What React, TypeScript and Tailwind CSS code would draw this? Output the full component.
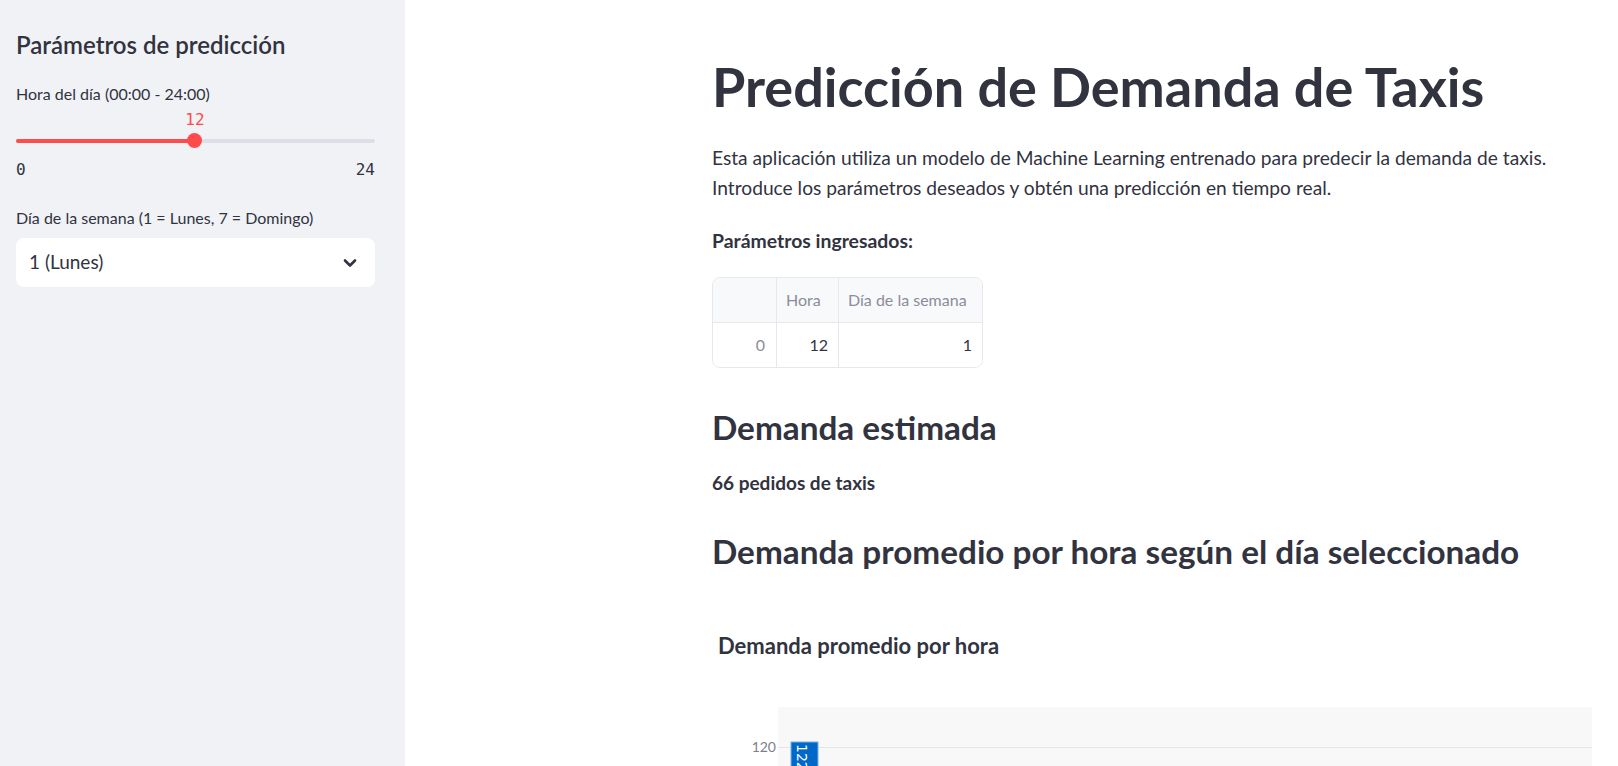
import React from "react";

const sans = { fontFamily: "Lato, 'Noto Sans', sans-serif" };
const mono = { fontFamily: "'DejaVu Sans Mono', 'Liberation Mono', monospace" };

function Sidebar() {
  return (
    <aside className="w-[405px] shrink-0 bg-[#f0f2f6] px-4 pt-[29px] text-[#31333f]">
      <h2 className="text-[24px] font-semibold leading-[32px]">Parámetros de predicción</h2>
      <div className="mt-[21px] text-[16px] leading-[24px]">Hora del día (00:00 - 24:00)</div>
      <div className="relative mt-[4px] h-[70px] w-[359px]" style={mono}>
        <div className="absolute left-[179px] top-0 -translate-x-1/2 text-[16px] leading-[20px] text-[#ff4b4b]">12</div>
        <div className="absolute left-0 right-0 top-[29px] h-[4px] rounded-full bg-[#dcdfe8]" />
        <div className="absolute left-0 top-[29px] h-[4px] w-[179px] rounded-full bg-[#ff4b4b]" />
        <div className="absolute left-[171px] top-[23px] h-[15px] w-[15px] rounded-full bg-[#ff4b4b]" />
        <div className="absolute left-0 top-[50px] text-[16px] leading-[20px] text-[#31333f]">0</div>
        <div className="absolute right-0 top-[50px] text-[16px] leading-[20px] text-[#31333f]">24</div>
      </div>
      <div className="mt-[26px] text-[16px] leading-[24px]">Día de la semana (1 = Lunes, 7 = Domingo)</div>
      <div className="mt-[8px] flex h-[49px] w-[359px] items-center justify-between rounded-[8px] bg-white pl-[13px] pr-[18px]">
        <span className="text-[19px]">1 (Lunes)</span>
        <svg width="14" height="10" viewBox="0 0 14 10" fill="none">
          <path d="M2 2.5 L7 7.5 L12 2.5" stroke="#31333f" strokeWidth="2.6" strokeLinecap="round" strokeLinejoin="round" />
        </svg>
      </div>
    </aside>
  );
}

function ParamTable() {
  return (
    <div className="mt-[21px] w-[271px] overflow-hidden rounded-[8px] border border-[#e6e8ee] text-[16px]">
      <div className="flex h-[45px] border-b border-[#e6e8ee] bg-[#f8f9fb] text-[#8a8d99]">
        <div className="w-[64px] border-r border-[#e6e8ee]" />
        <div className="flex w-[62px] items-center border-r border-[#e6e8ee] pl-[9px]">Hora</div>
        <div className="flex flex-1 items-center pl-[9px]">Día de la semana</div>
      </div>
      <div className="flex h-[44px] bg-white">
        <div className="flex w-[64px] items-center justify-end border-r border-[#e6e8ee] pr-[11px] text-[#8a8d99]">0</div>
        <div className="flex w-[62px] items-center justify-end border-r border-[#e6e8ee] pr-[10px]">12</div>
        <div className="flex flex-1 items-center justify-end pr-[10px]">1</div>
      </div>
    </div>
  );
}

function Chart() {
  return (
    <div className="mt-[62px]">
      <div className="pl-[6px] text-[22px] font-bold leading-[26px]">Demanda promedio por hora</div>
      <div className="mt-[48px] flex">
        <div className="relative w-[66px] shrink-0">
          <span className="absolute right-[2px] top-[31px] text-[14px] leading-[18px] text-[#7d808c]">120</span>
        </div>
        <div className="relative h-[80px] w-[814px] shrink-0 bg-[#f8f8f8]">
          <svg className="absolute inset-0" width="814" height="80">
            <line x1="0" x2="814" y1="40.5" y2="40.5" stroke="#e4e5ea" strokeWidth="1.2" />
            <rect x="13" y="35" width="27" height="60" fill="#0068c9" stroke="#7fb0e4" strokeWidth="1" />
            <text x="22" y="37" fill="#ffffff" fontSize="14" fontFamily="DejaVu Sans, sans-serif" transform="rotate(90 22 37)" dominantBaseline="middle" dy="-1">122</text>
          </svg>
        </div>
      </div>
    </div>
  );
}

function Main() {
  return (
    <main className="min-w-0 flex-1 overflow-hidden pl-[307px] pt-[57px] text-[#31333f]">
      <div className="w-[900px]">
        <h1 className="whitespace-nowrap text-[54px] font-bold leading-[60px]">Predicción de Demanda de Taxis</h1>
        <div className="mt-[26px] whitespace-nowrap text-[19.2px] leading-[30px]">
          <p>Esta aplicación utiliza un modelo de Machine Learning entrenado para predecir la demanda de taxis.</p>
          <p>Introduce los parámetros deseados y obtén una predicción en tiempo real.</p>
        </div>
        <div className="mt-[23px] text-[19.4px] font-bold leading-[30px]">Parámetros ingresados:</div>
        <ParamTable />
        <h3 className="mt-[39px] text-[33.3px] font-bold leading-[40px]">Demanda estimada</h3>
        <div className="mt-[21px] text-[19px] font-bold leading-[30px]">66 pedidos de taxis</div>
        <h3 className="mt-[33px] whitespace-nowrap text-[33.3px] font-bold leading-[40px]">Demanda promedio por hora según el día seleccionado</h3>
        <Chart />
      </div>
    </main>
  );
}

export default function App() {
  return (
    <div className="flex h-[766px] w-[1618px] overflow-hidden bg-white" style={sans}>
      <Sidebar />
      <Main />
    </div>
  );
}
